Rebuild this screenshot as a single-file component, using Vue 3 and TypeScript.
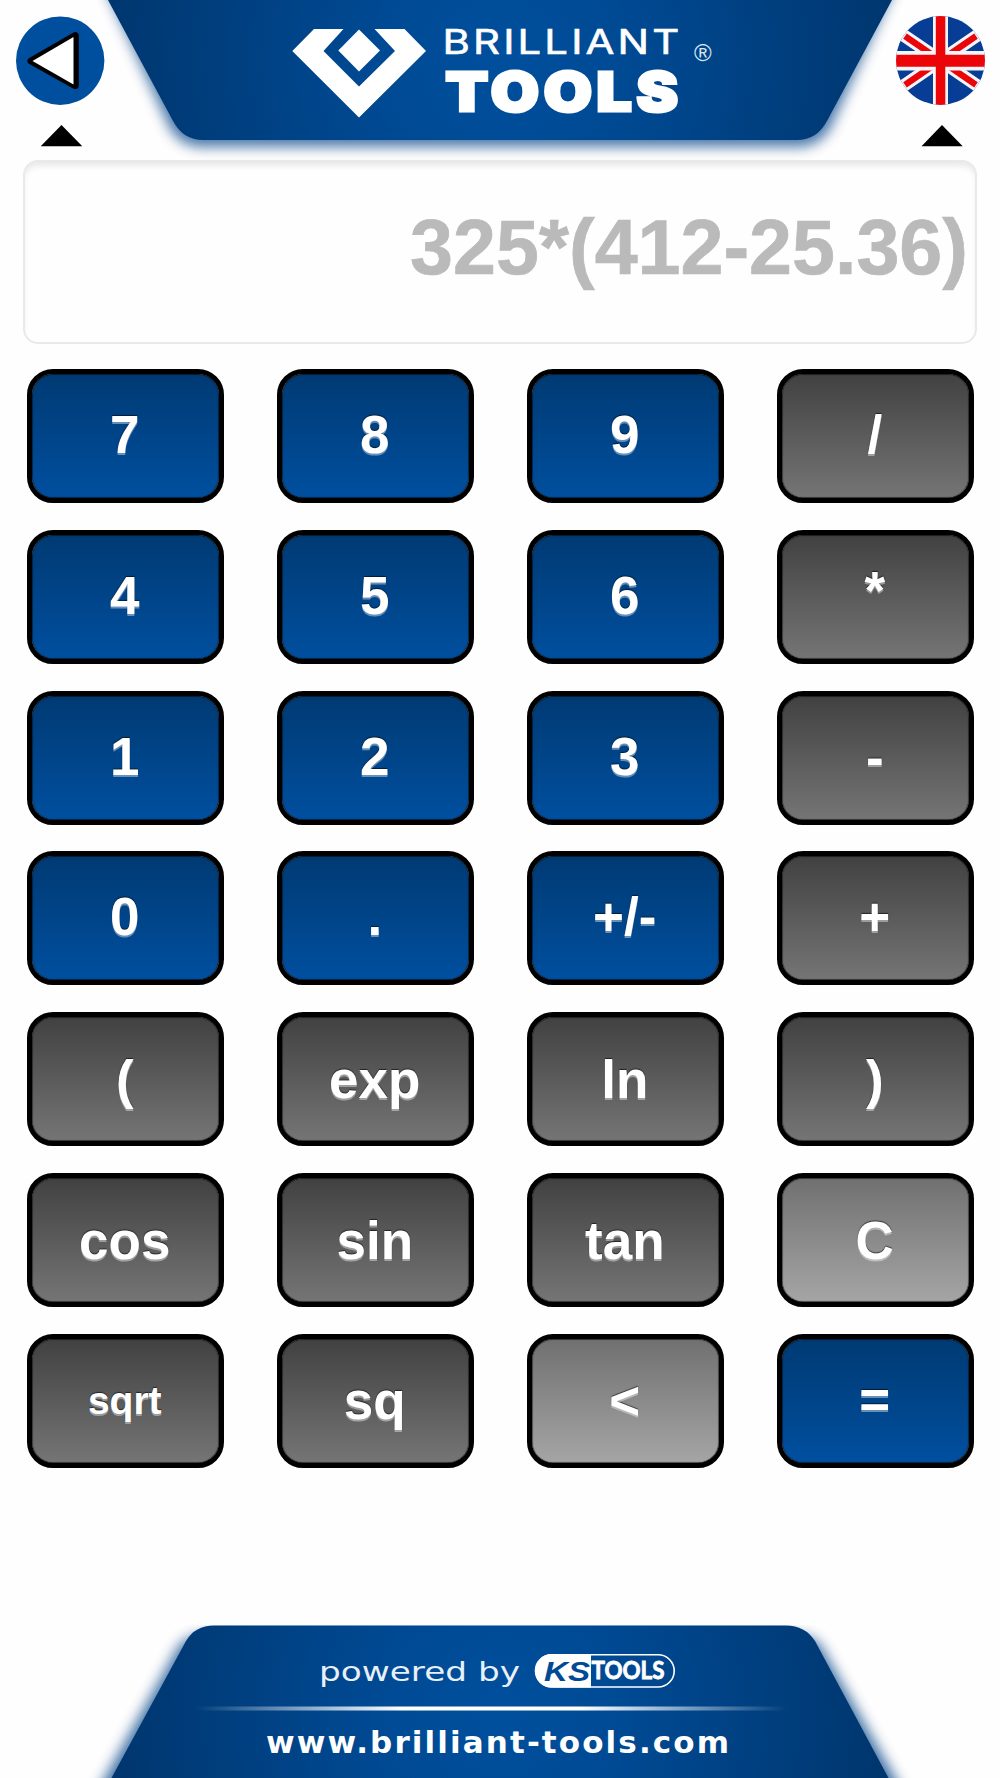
<script setup lang="ts">
import { ref } from 'vue'

type Tone = 'blue' | 'dark' | 'light'
interface Key {
  label: string
  tone: Tone
  mod?: 'small' | 'raised' | 'star'
}

const blue = (label: string): Key => ({ label, tone: 'blue', mod: 'raised' })
const dark = (label: string, mod?: Key['mod']): Key => ({ label, tone: 'dark', mod })
const light = (label: string): Key => ({ label, tone: 'light' })

const keys: Key[] = [
  blue('7'), blue('8'), blue('9'), dark('/', 'raised'),
  blue('4'), blue('5'), blue('6'), dark('*', 'star'),
  blue('1'), blue('2'), blue('3'), dark('-'),
  blue('0'), blue('.'), blue('+/-'), dark('+', 'raised'),
  dark('('), dark('exp'), dark('ln'), dark(')'),
  dark('cos'), dark('sin'), dark('tan'), light('C'),
  dark('sqrt', 'small'), dark('sq'), light('<'), blue('='),
]

const expression = ref('325*(412-25.36)')

function press(key: Key) {
  if (key.label === 'C') expression.value = ''
  else if (key.label === '<') expression.value = expression.value.slice(0, -1)
  else if (key.label !== '=' && key.label !== '+/-') expression.value += key.label
}
</script>

<template>
  <main class="app">
    <header class="top">
      <nav class="side">
        <svg width="120" height="160" viewBox="0 0 120 160">
          <circle cx="60.2" cy="60.7" r="44.2" fill="#004f9f" />
          <path d="M31 61 75.3 35.6V85.6Z" fill="#000" stroke="#000" stroke-width="7" stroke-linejoin="round" />
          <path d="M32.5 61 73.5 37V84.6Z" fill="#fff" />
          <path d="M61.5 125 82.3 146.3H40.7Z" fill="#000" />
        </svg>
      </nav>
      <svg class="banner" width="760" height="160" viewBox="120 0 760 160">
        <defs>
          <radialGradient id="topFill" gradientUnits="userSpaceOnUse" cx="500" cy="60" r="400">
            <stop offset="0" stop-color="#004f9d" />
            <stop offset="0.3" stop-color="#004a94" />
            <stop offset="1" stop-color="#00366e" />
          </radialGradient>
          <filter id="topBlur" filterUnits="userSpaceOnUse" x="60" y="-60" width="880" height="240">
            <feGaussianBlur stdDeviation="6.5" />
          </filter>
        </defs>
        <path d="M102 -20 169 127Q180 147 203 147H797Q820 147 831 127L898 -20Z" fill="#003f85" opacity="0.7" filter="url(#topBlur)" />
        <path d="M108 0 173 121Q183 140 203 140H797Q817 140 827 121L892 0Z" fill="url(#topFill)" />
        <g fill="#fff">
          <path d="M314 29H343.5L323.5 51 359 86.5 395 51 374.5 29H404.5L426 51 359 117.5 292.3 51Z" />
          <path d="M359 29.5 380 50.5 359 71.5 338.3 50.5Z" />
          <text class="brand" x="442.5" y="54" textLength="240" lengthAdjust="spacingAndGlyphs">BRILLIANT</text>
          <text class="tools" x="445.5" y="111" textLength="237" lengthAdjust="spacingAndGlyphs">TOOLS</text>
          <text class="reg" x="694" y="61">®</text>
        </g>
      </svg>
      <nav class="side">
        <svg width="120" height="160" viewBox="880 0 120 160">
          <defs>
            <clipPath id="flagClip"><circle cx="940.5" cy="60.5" r="44.5" /></clipPath>
          </defs>
          <g clip-path="url(#flagClip)">
            <path d="M890 10H990V110H890Z" fill="#083d95" />
            <path d="M890 26 991 95M991 26 890 95" stroke="#f4f5f8" stroke-width="12.5" />
            <path d="M905 36.2 976 84.8M976 36.2 905 84.8" stroke="#eb0408" stroke-width="6.3" />
            <path d="M933 10H948V110H933ZM890 51H990V70.5H890Z" fill="#f4f5f8" />
            <path d="M935.8 10H945.3V110H935.8ZM890 54.7H990V66.8H890Z" fill="#eb0408" />
          </g>
          <path d="M942 125 962.7 146.3H921.5Z" fill="#000" />
        </svg>
      </nav>
    </header>

    <output class="display">{{ expression }}</output>

    <section class="keypad">
      <button
        v-for="key in keys"
        :key="key.label"
        type="button"
        class="key"
        :class="[key.tone, key.mod]"
        @click="press(key)"
      ><span>{{ key.label }}</span></button>
    </section>

    <footer class="bottom">
      <svg width="1000" height="153" viewBox="0 1625 1000 153">
        <defs>
          <radialGradient id="footFill" gradientUnits="userSpaceOnUse" cx="500" cy="1715" r="400">
            <stop offset="0" stop-color="#004f9d" />
            <stop offset="0.3" stop-color="#004a94" />
            <stop offset="1" stop-color="#00356c" />
          </radialGradient>
          <linearGradient id="rule">
            <stop offset="0" stop-color="#fff" stop-opacity="0" />
            <stop offset="0.35" stop-color="#fff" />
            <stop offset="0.65" stop-color="#fff" />
            <stop offset="1" stop-color="#fff" stop-opacity="0" />
          </linearGradient>
          <filter id="footBlur" filterUnits="userSpaceOnUse" x="40" y="1600" width="920" height="260">
            <feGaussianBlur stdDeviation="6.5" />
          </filter>
        </defs>
        <path d="M87 1810 179 1646Q188 1634 212 1634H788Q812 1634 821 1646L913 1810Z" fill="#003f85" opacity="0.75" filter="url(#footBlur)" />
        <path d="M111.5 1778 186 1641Q195 1625.5 214 1625.5H786Q805 1625.5 815 1641L888.5 1778Z" fill="url(#footFill)" />
        <text class="powered" x="319" y="1681" textLength="201" lengthAdjust="spacingAndGlyphs">powered by</text>
        <rect x="535.8" y="1654.8" width="138.4" height="32.2" rx="16.1" fill="none" stroke="#fff" stroke-width="1.6" />
        <path d="M591 1654H551.5A16.8 16.8 0 0 0 551.5 1687.6H591Z" fill="#fff" />
        <text class="ks" x="544" y="1680.5" textLength="46" lengthAdjust="spacingAndGlyphs">KS</text>
        <text class="kstools" x="591.5" y="1679.3" textLength="73" lengthAdjust="spacingAndGlyphs">TOOLS</text>
        <rect x="195" y="1706.5" width="592" height="4" fill="url(#rule)" />
        <text class="url" x="266" y="1753" textLength="463" lengthAdjust="spacing">www.brilliant-tools.com</text>
      </svg>
    </footer>
  </main>
</template>

<style>
body {
  margin: 0;
  background: #fefefe;
}
</style>

<style scoped>
.app {
  width: 1000px;
  height: 1778px;
  display: flex;
  flex-direction: column;
  overflow: hidden;
  background: #fefefe;
  font-family: "Liberation Sans", Arial, sans-serif;
}
.top {
  display: flex;
  height: 160px;
  flex: none;
}
.side {
  width: 120px;
}
svg {
  display: block;
}
.banner {
  overflow: visible;
}
.brand {
  font: 400 34.5px Inter, sans-serif;
  letter-spacing: 2.6px;
  stroke: #fff;
  stroke-width: 0.6px;
}
.tools {
  font: 900 53px Inter, sans-serif;
  letter-spacing: 4px;
  stroke: #fff;
  stroke-width: 3px;
}
.reg {
  font: 400 24px "Liberation Sans", sans-serif;
  fill: #dbe6f2;
}
.display {
  box-sizing: border-box;
  flex: none;
  height: 184px;
  margin: 0 23px;
  padding: 0 7px 0 0;
  border: 2px solid #e9e9e9;
  border-radius: 15px;
  box-shadow: inset 0 6px 7px -3px #e4e4e4;
  text-align: right;
  font-size: 77.2px;
  font-weight: 700;
  line-height: 171px;
  color: #bababa;
  -webkit-text-stroke: 0.7px #bababa;
}
.keypad {
  display: grid;
  grid-template-columns: repeat(4, 196.5px);
  grid-auto-rows: 134px;
  gap: 26.83px 53.5px;
  margin: 25px 0 0 27px;
}
.key {
  display: flex;
  align-items: center;
  justify-content: center;
  padding: 0 1px 0 0;
  border: 5px solid #000;
  border-radius: 26px;
  box-shadow: inset 0 0 1px 0.4px #000;
  color: #fff;
  font: 700 53px "Liberation Sans", Arial, sans-serif;
  text-shadow: 0 2px 0 rgba(255, 255, 255, 0.4), 0 -1px 1px rgba(0, 0, 0, 0.6);
}
.raised {
  padding-bottom: 3px;
}
.star {
  padding-bottom: 13px;
}
.key.small {
  font-size: 39px;
}
.blue {
  background: linear-gradient(#003a73, #004f9f) padding-box;
}
.dark {
  background: linear-gradient(#414141, #757575) padding-box;
}
.light {
  background: linear-gradient(#707070, #a5a5a5) padding-box;
}
.bottom {
  margin-top: auto;
}
.powered {
  font: 400 27px "DejaVu Sans", sans-serif;
  fill: #e8f0f8;
}
.ks {
  font: italic 700 27px "Liberation Sans", sans-serif;
  fill: #004b96;
}
.kstools {
  font: 700 24px Lato, sans-serif;
  fill: #fff;
  stroke: #fff;
  stroke-width: 0.8px;
}
.url {
  font: 700 31px "DejaVu Sans", sans-serif;
  fill: #fff;
}
</style>
